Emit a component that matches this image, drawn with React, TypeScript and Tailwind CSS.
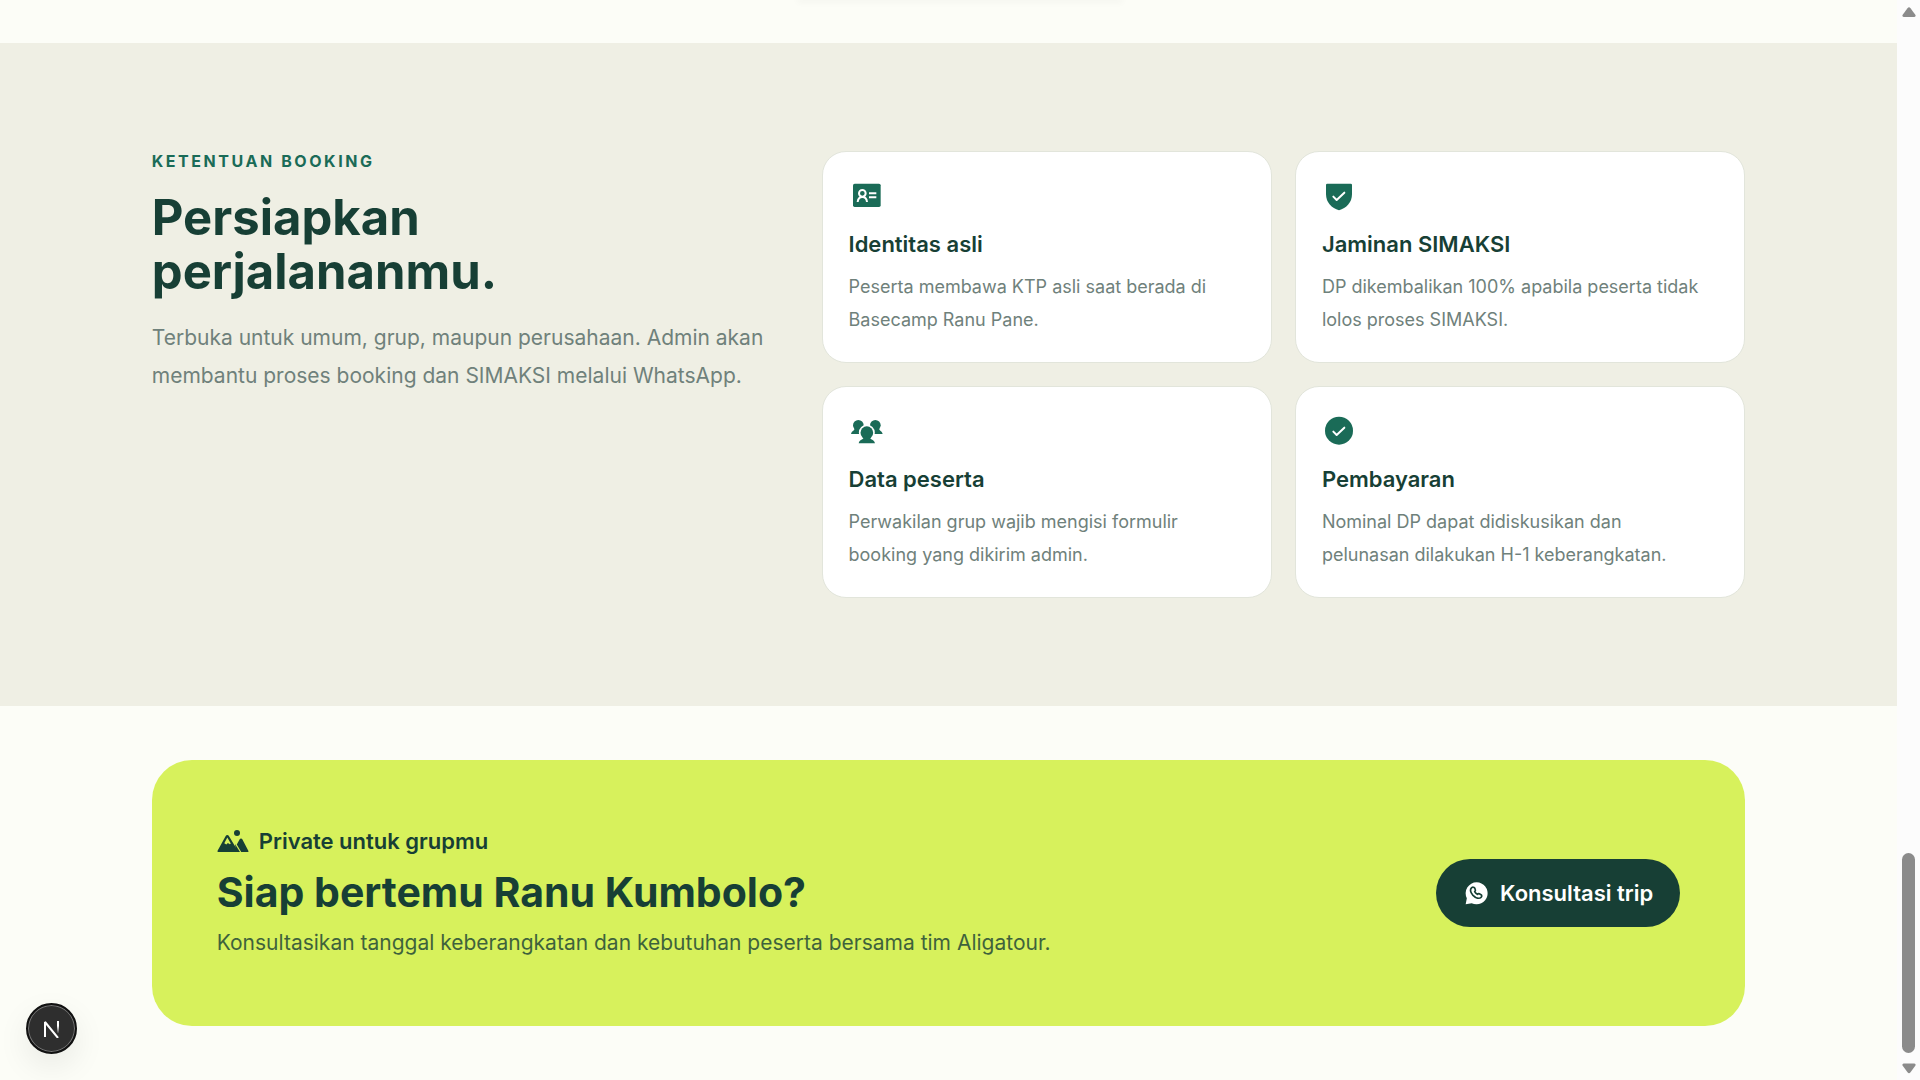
import React from 'react';

// Booking rules shown as cards next to the heading.
const rules = [
  {
    id: 1,
    icon: <IdCardIcon />,
    title: 'Identitas asli',
    text: 'Peserta membawa KTP asli saat berada di Basecamp Ranu Pane.',
  },
  {
    id: 2,
    icon: <ShieldIcon />,
    title: 'Jaminan SIMAKSI',
    text: 'DP dikembalikan 100% apabila peserta tidak lolos proses SIMAKSI.',
  },
  {
    id: 3,
    icon: <GroupIcon />,
    title: 'Data peserta',
    text: 'Perwakilan grup wajib mengisi formulir booking yang dikirim admin.',
  },
  {
    id: 4,
    icon: <CheckIcon />,
    title: 'Pembayaran',
    text: 'Nominal DP dapat didiskusikan dan pelunasan dilakukan H-1 keberangkatan.',
  },
];

function IdCardIcon() {
  return (
    <svg viewBox="0 0 108 108" className="size-9" fill="none" aria-hidden="true">
      <rect x="12" y="17" width="83" height="70" rx="5" fill="currentColor" />
      <g stroke="#fff" strokeWidth="6">
        <circle cx="40" cy="46" r="10" />
        <path d="M26 72c1-10 6-15 14-15s13 5 14 15M60 46h22M60 58h22" />
      </g>
    </svg>
  );
}

function ShieldIcon() {
  return (
    <svg viewBox="0 0 108 108" className="size-9" fill="none" aria-hidden="true">
      <path
        d="M16 17h70a4 4 0 0 1 4 4v27c0 26-17 42-39 49C29 90 12 74 12 48V21a4 4 0 0 1 4-4z"
        fill="currentColor"
      />
      <path d="M34 56l10 10 23-22" stroke="#fff" strokeWidth="6" strokeLinecap="round" strokeLinejoin="round" />
    </svg>
  );
}

function GroupIcon() {
  return (
    <svg viewBox="0 0 108 108" className="size-9" fill="currentColor" aria-hidden="true">
      <circle cx="28" cy="37" r="16" />
      <path d="M16 45c2 10-7 6-10 18h28l8-16z" />
      <circle cx="79" cy="37" r="16" />
      <path d="M91 45c-2 10 7 6 10 18H73l-8-16z" />
      <g stroke="#fff" strokeWidth="10" strokeLinejoin="round">
        <circle cx="53.500" cy="59" r="19" />
        <path d="M43 70c4 12-11 7-14 21h49c-3-14-18-9-14-21z" />
      </g>
      <circle cx="53.500" cy="59" r="19" />
      <path d="M43 70c4 12-11 7-14 21h49c-3-14-18-9-14-21z" />
    </svg>
  );
}

function CheckIcon() {
  return (
    <svg viewBox="0 0 108 108" className="size-9" fill="none" aria-hidden="true">
      <circle cx="51" cy="53" r="42" fill="currentColor" />
      <path d="M34 56l10 10 23-22" stroke="#fff" strokeWidth="6" strokeLinecap="round" strokeLinejoin="round" />
    </svg>
  );
}

function MountainIcon() {
  return (
    <svg viewBox="0 0 32 32" className="size-8" fill="currentColor" aria-hidden="true">
      <circle cx="20" cy="8" r="3" />
      <path
        fillRule="evenodd"
        d="M10.3 10c.7 0 1.200.3 1.600 1L21.500 27H1.500c-1 0-1.300-.6-.8-1.500L8.700 11c.4-.7.900-1 1.600-1zM10.300 12.500L7.300 18.200l2 1.200 1.600-1.300 1.900 1.100 1-.6z"
      />
      <path d="M24 13.500c.6 0 1 .2 1.300.8l6 11.400c.4.8.1 1.300-.7 1.300h-6.400l-4.400-7.600 2.900-5.100c.3-.6.700-.8 1.300-.8z" />
      <path d="M18 19l5 8h-4z" />
    </svg>
  );
}

function WhatsAppIcon() {
  return (
    <svg viewBox="0 0 81 81" className="size-[27px]" fill="none" aria-hidden="true">
      <path d="M41 7a33 33 0 1 1-15 62.500L8 73l3.500-18A33 33 0 0 1 41 7z" fill="#fff" />
      <path
        d="M26 23c-5 5-4 14 4 23 9 9 19 11 24 6 3-3 3-6 0-8l-5-3c-2-1-4 0-6 2-4-2-6-4-8-8 2-2 3-4 2-6l-2-5c-2-3-6-3-9-1z"
        stroke="currentColor"
        strokeWidth="5"
        strokeLinejoin="round"
      />
    </svg>
  );
}

function BookingRules() {
  return (
    <section className="bg-[#efefe4] px-[8%] py-[108px]">
      <div className="grid gap-[54px] lg:grid-cols-[2fr_3fr]">
        <div>
          <p className="text-base leading-5 font-bold tracking-[0.16em] text-[#1a6b57] uppercase">Ketentuan booking</p>
          <h2 className="mt-5 text-[49px] leading-[54px] font-bold">
            Persiapkan
            <br />
            perjalananmu.
          </h2>
          <p className="mt-5 text-[21px] leading-[38px] text-[#6f817b]">
            Terbuka untuk umum, grup, maupun perusahaan. Admin akan membantu proses booking dan SIMAKSI melalui
            WhatsApp.
          </p>
        </div>

        <div className="grid gap-[23px] sm:grid-cols-2">
          {rules.map((rule) => (
            <article key={rule.id} className="rounded-3xl border border-[#e2e5db] bg-white p-[26px]">
              <div className="text-[#1a6b57]">{rule.icon}</div>
              <h3 className="mt-3 text-[22px] leading-9 font-semibold">{rule.title}</h3>
              <p className="mt-2 pr-2 text-lg leading-[33px] text-[#6f817b]">{rule.text}</p>
            </article>
          ))}
        </div>
      </div>
    </section>
  );
}

function CallToAction() {
  return (
    <section className="px-[8%] py-[54px]">
      <div className="flex flex-wrap items-center justify-between gap-8 rounded-[40px] bg-[#d7f15c] p-[65px]">
        <div>
          <div className="flex items-center gap-[10px]">
            <MountainIcon />
            <span className="text-[22px] leading-8 font-semibold">Private untuk grupmu</span>
          </div>
          <h2 className="mt-2 text-[41px] leading-[54px] font-bold">Siap bertemu Ranu Kumbolo?</h2>
          <p className="mt-[6px] text-[21px] leading-9 opacity-80">
            Konsultasikan tanggal keberangkatan dan kebutuhan peserta bersama tim Aligatour.
          </p>
        </div>
        <a href="#konsultasi" className="flex items-center gap-[10px] rounded-full bg-[#173f35] px-[27px] py-4 text-[#173f35]">
          <WhatsAppIcon />
          <span className="text-[22px] leading-9 font-semibold text-white">Konsultasi trip</span>
        </a>
      </div>
    </section>
  );
}

function DevBadge() {
  return (
    <button
      type="button"
      aria-label="Next.js"
      className="fixed bottom-[26px] left-[26px] flex size-[51px] items-center justify-center rounded-full border-2 border-[#111] bg-[#2e2e2e] shadow-[0_12px_32px_rgba(0,0,0,0.08)] ring-1 ring-[#777] ring-inset"
    >
      <svg viewBox="0 0 18 18" className="size-[18px]" fill="none" aria-hidden="true">
        <defs>
          <linearGradient id="badge-fade" x1="0" y1="0" x2="0" y2="1">
            <stop offset="0.4" stopColor="#fff" />
            <stop offset="1" stopColor="#fff" stopOpacity="0.1" />
          </linearGradient>
        </defs>
        <path d="M2 17V2l13 16" stroke="#fff" strokeWidth="2" strokeLinejoin="bevel" />
        <rect x="14" y="1" width="2" height="12" fill="url(#badge-fade)" />
      </svg>
    </button>
  );
}

function ScrollRail() {
  return (
    <div className="sticky top-0 flex h-screen w-[23px] shrink-0 flex-col items-center bg-[#fcfcfc] pt-[7px] pb-[6px] text-[#8b8b8b]" aria-hidden="true">
      <svg viewBox="0 0 14 10" className="h-[10px] w-[14px]" fill="currentColor">
        <path d="M5.500 1.200q1.500-1.800 3 0l4.800 6.500q1 1.800-1 2.300H1.700q-2-.5-1-2.300z" />
      </svg>
      <div className="mt-auto h-[200px] w-[13px] rounded-full bg-[#8b8b8b]" />
      <svg viewBox="0 0 14 10" className="mt-[10px] h-[11px] w-[14px]" fill="currentColor">
        <path d="M5.500 8.800q1.500 1.800 3 0l4.800-6.500q1-1.800-1-2.300H1.700q-2 .5-1 2.300z" />
      </svg>
    </div>
  );
}

export default function App() {
  return (
    <div className="flex min-h-screen bg-[#fcfdf7] font-['Inter',sans-serif] text-[#173f35]">
      {/* Soft shadow cast from above the top edge of the window */}
      <div className="fixed top-0 left-1/2 h-0 w-1/6 -translate-x-1/2 shadow-[0_0_6px_3px_rgba(0,0,0,0.03)]" />
      <main className="min-w-0 flex-1">
        <div className="h-[43px]" />
        <BookingRules />
        <CallToAction />
      </main>
      <ScrollRail />
      <DevBadge />
    </div>
  );
}
